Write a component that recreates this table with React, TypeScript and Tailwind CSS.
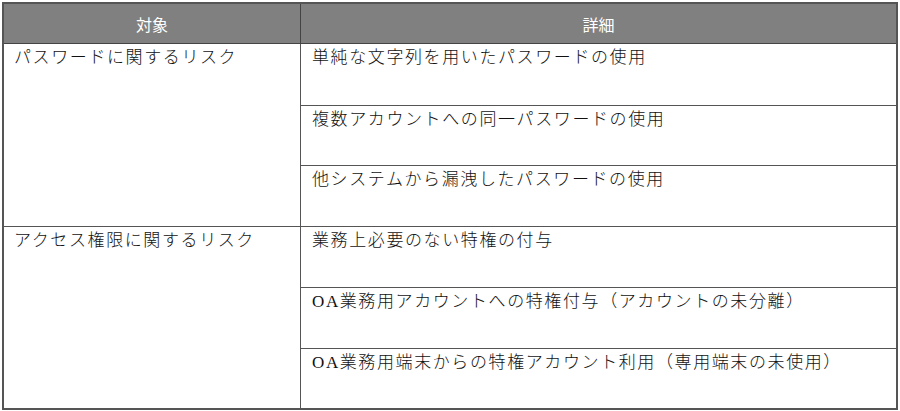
const sections = [
  {
    target: "パスワードに関するリスク",
    details: [
      "単純な文字列を用いたパスワードの使用",
      "複数アカウントへの同一パスワードの使用",
      "他システムから漏洩したパスワードの使用",
    ],
  },
  {
    target: "アクセス権限に関するリスク",
    details: [
      "業務上必要のない特権の付与",
      "OA業務用アカウントへの特権付与（アカウントの未分離）",
      "OA業務用端末からの特権アカウント利用（専用端末の未使用）",
    ],
  },
];

const bodyFont = "font-['Liberation_Serif','Noto_Sans_CJK_JP',serif]";

export default function App() {
  return (
    <div className="w-[900px] h-[411px] bg-white pl-[2px] pt-[2px]">
      <div className="w-[896px] border-2 border-[#555555] text-[#111111]">
        {/* header */}
        <div className="flex h-[40px] bg-[#808080] text-white text-[16px] font-['Noto_Sans_CJK_JP',sans-serif] border-b border-[#444444]">
          <div className="w-[297px] flex items-center justify-center border-r border-[#444444]">対象</div>
          <div className="flex-1 flex items-center justify-center">詳細</div>
        </div>

        {sections.map((s, i) => (
          <div
            key={s.target}
            className={`flex ${bodyFont} font-light text-[17px] tracking-[1.6px] ${i > 0 ? "border-t border-[#555555]" : ""}`}
          >
            <div className="w-[297px] border-r border-[#555555] pl-[10px] pt-[2px] leading-[24px]">
              {s.target}
            </div>
            <div className="flex-1">
              {s.details.map((d, j) => (
                <div
                  key={d}
                  className={`h-[60.5px] pl-[11px] pt-[2px] leading-[24px] ${j > 0 ? "border-t border-[#555555]" : ""}`}
                >
                  {d}
                </div>
              ))}
            </div>
          </div>
        ))}
      </div>
    </div>
  );
}
